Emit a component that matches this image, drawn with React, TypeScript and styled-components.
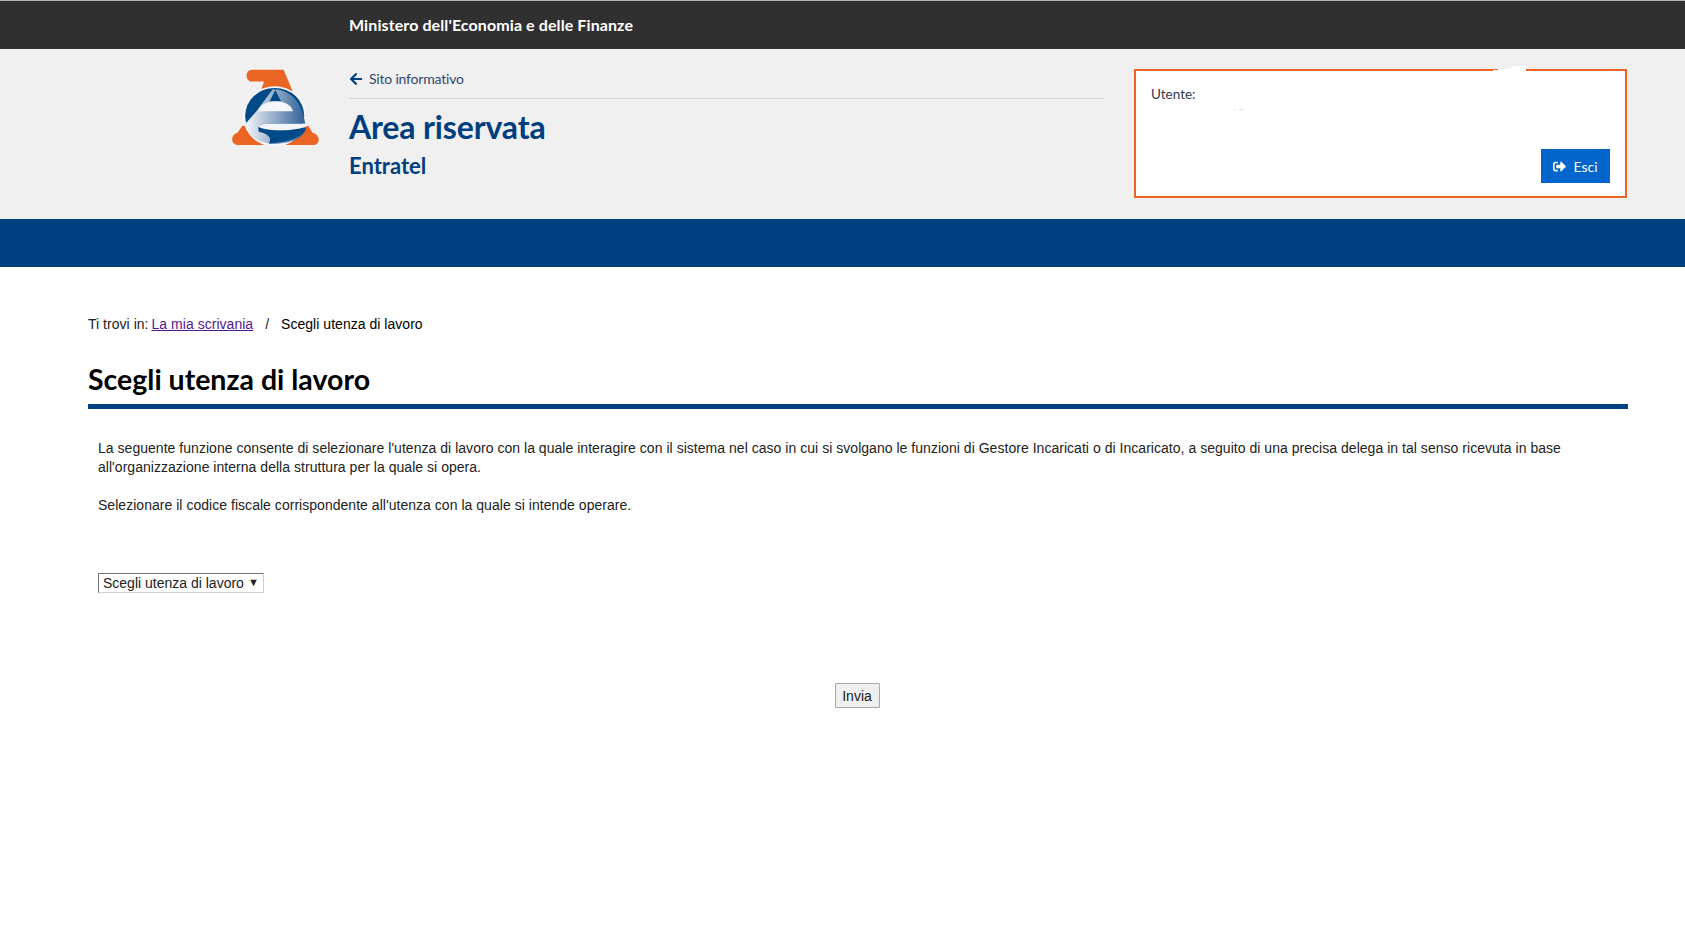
import React from "react";
import styled, { createGlobalStyle } from "styled-components";
import { FaArrowLeft, FaSignOutAlt } from "react-icons/fa";

const Global = createGlobalStyle`
  html, body { margin: 0; padding: 0; background: #fff; }
  body { font-family: "Liberation Sans", Arial, sans-serif; font-size: 14px; color: #222; }
`;

const brandFont = `Lato, "Noto Sans", sans-serif`;

const TopBar = styled.div`
  height: 46px;
  border-top: 1px solid #b5b5b5;
  background: #303030;
  padding: 0 0 2px 349px;
  display: flex;
  align-items: center;
`;

const Ministry = styled.span`
  font-family: ${brandFont};
  font-weight: 700;
  font-size: 16px;
  letter-spacing: 0.1px;
  color: #fff;
`;

const Header = styled.header`
  height: 170px;
  box-sizing: border-box;
  background: #f0f0f0;
  padding: 20px 0 0 232px;
  display: flex;
  align-items: flex-start;
`;

const LogoWrap = styled.div`
  width: 88px;
  margin-right: 29px;
`;

const TitleColumn = styled.div`
  width: 755px;
  margin-right: 30px;
  font-family: ${brandFont};
  color: #003f7f;
`;

const BackLink = styled.div`
  height: 29px;
  border-bottom: 1px solid #d4d4d8;
  display: flex;
  align-items: flex-start;
  gap: 6px;
  font-size: 14px;
  line-height: 20px;
  letter-spacing: -0.2px;
  color: #33476f;
  svg { color: #003f7f; margin-top: 3px; }
`;

const AreaTitle = styled.h1`
  margin: 8px 0 0;
  font-size: 32px;
  line-height: 40px;
  font-weight: 700;
  letter-spacing: -0.15px;
`;

const SubTitle = styled.h2`
  margin: 5px 0 0;
  font-size: 22px;
  line-height: 28px;
  font-weight: 700;
`;

const UserBox = styled.div`
  position: relative;
  width: 493px;
  height: 129px;
  box-sizing: border-box;
  border: 2px solid #ea6423;
  background: #fff;
  padding: 13px 15px;
  display: flex;
  flex-direction: column;
  justify-content: space-between;
  font-family: ${brandFont};
`;

const UserLabel = styled.div`
  font-size: 13.5px;
  line-height: 20px;
  color: #2f3a4f;
`;

const ExitButton = styled.button`
  align-self: flex-end;
  width: 69px;
  height: 34px;
  border: 0;
  background: #0066cc;
  color: #fff;
  font-family: ${brandFont};
  font-size: 14px;
  display: flex;
  align-items: center;
  justify-content: center;
  gap: 7px;
  padding: 0;
`;

const Smudge = styled.svg`
  position: absolute;
  left: 357px;
  top: -6px;
`;

const Speck = styled.svg`
  position: absolute;
  left: 97px;
  top: 38px;
`;

const NavBar = styled.div`
  height: 48px;
  background: #004080;
`;

const Main = styled.main`
  margin: 0 57px 0 88px;
  padding-top: 47px;
`;

const Crumbs = styled.nav`
  line-height: 20px;
  font-size: 14px;
  letter-spacing: 0.03px;
  color: #222;
  display: flex;
`;

const CrumbLink = styled.a`
  color: #551a8b;
  text-decoration: underline;
  margin-left: 3px;
`;

const CrumbSep = styled.span`
  margin: 0 12px;
`;

const CrumbCurrent = styled.span`
  color: #000;
`;

const PageTitle = styled.h2`
  margin: 24px 0 0;
  height: 51px;
  box-sizing: border-box;
  border-bottom: 5px solid #004080;
  font-family: ${brandFont};
  font-size: 28.5px;
  line-height: 42px;
  font-weight: 700;
  color: #000;
`;

const Body = styled.section`
  padding: 30px 10px 0;
`;

const Paragraph = styled.p`
  margin: 0 0 19px;
  font-size: 14px;
  line-height: 19px;
  letter-spacing: 0.033px;
  color: #222;
`;

const SelectWrap = styled.div`
  position: relative;
  display: inline-block;
  margin-top: 39px;
`;

const UtenzaSelect = styled.select`
  appearance: none;
  display: block;
  width: 166px;
  height: 20px;
  box-sizing: border-box;
  border-width: 1px;
  border-style: solid;
  border-color: #767676 #d0d0d0 #d0d0d0 #767676;
  background: #fff;
  padding: 0 0 0 4px;
  border-radius: 0;
  font-family: "Liberation Sans", Arial, sans-serif;
  font-size: 14px;
  color: #222;
`;

const SelectArrow = styled.span`
  position: absolute;
  right: 5px;
  top: 2px;
  font-size: 11px;
  line-height: 14px;
  pointer-events: none;
  color: #222;
`;

const Actions = styled.div`
  display: flex;
  justify-content: center;
  padding: 90px 2px 0 0;
`;

const SendButton = styled.button`
  width: 45px;
  height: 25px;
  padding: 0;
  border: 1px solid #a8a8a8;
  border-radius: 1px;
  background: #efefef;
  font-family: "Liberation Sans", Arial, sans-serif;
  font-size: 14px;
  color: #222;
`;

const Logo = () => (
  <svg width="88" height="77" viewBox="50 25 264 232" style={{ display: "block" }}>
    <defs>
      <linearGradient id="eBand" x1="0" x2="1" y1="0" y2="0">
        <stop offset="0" stopColor="#f4f6fa" />
        <stop offset="1" stopColor="#2f5f96" />
      </linearGradient>
    </defs>
    <path d="M110 27H205L232 92H136L146 63H110C88 63 88 27 110 27Z" fill="#ea6423" />
    <path
      d="M80 197H280L292 217C316 222 318 254 292 254H70C44 254 44 222 66 217Z"
      fill="#ea6423"
    />
    <ellipse cx="178" cy="168" rx="95" ry="91" fill="#f4f6fa" />
    <ellipse cx="178" cy="166" rx="89" ry="84" fill="#004a87" />
    <path
      d="M172 86C225 86 262 125 270 190H150L160 204C190 214 240 212 268 202C272 230 230 250 178 250C130 250 96 225 90 190L125 150Z"
      fill="url(#eBand)"
    />
    <path d="M150 190H272L273 202C230 214 170 214 128 200Z" fill="#f4f6fa" />
    <path d="M180 88L197 122H163Z" fill="#004a87" />
    <path d="M128 152C133 130 160 122 182 122C205 122 228 132 233 152Z" fill="#f4f6fa" />
    <path
      d="M128 200C160 214 225 214 272 200C276 222 230 246 160 250C170 236 165 222 130 214Z"
      fill="#004a87"
    />
  </svg>
);

const App = () => {
  return (
    <>
      <Global />
      <TopBar>
        <Ministry>Ministero dell'Economia e delle Finanze</Ministry>
      </TopBar>
      <Header>
        <LogoWrap>
          <Logo />
        </LogoWrap>
        <TitleColumn>
          <BackLink>
            <FaArrowLeft size={14} />
            Sito informativo
          </BackLink>
          <AreaTitle>Area riservata</AreaTitle>
          <SubTitle>Entratel</SubTitle>
        </TitleColumn>
        <UserBox>
          <Smudge width="34" height="10" viewBox="0 0 34 10">
            <path d="M0 5H5V4H15L22 1H33V9H0Z" fill="#fff" />
          </Smudge>
          <Speck width="12" height="1" viewBox="0 0 12 1">
            <path d="M0 0H2V1H0ZM6 0H11V1H6Z" fill="#e2e4ee" />
          </Speck>
          <UserLabel>Utente:</UserLabel>
          <ExitButton>
            <FaSignOutAlt size={13} />
            Esci
          </ExitButton>
        </UserBox>
      </Header>
      <NavBar />
      <Main>
        <Crumbs>
          Ti trovi in:
          <CrumbLink href="#">La mia scrivania</CrumbLink>
          <CrumbSep>/</CrumbSep>
          <CrumbCurrent>Scegli utenza di lavoro</CrumbCurrent>
        </Crumbs>
        <PageTitle>Scegli utenza di lavoro</PageTitle>
        <Body>
          <Paragraph>
            La seguente funzione consente di selezionare l'utenza di lavoro con la quale interagire con il sistema nel caso in cui si svolgano le funzioni di Gestore Incaricati o di Incaricato, a seguito di una precisa delega in tal senso ricevuta in base all'organizzazione interna della struttura per la quale si opera.
          </Paragraph>
          <Paragraph>
            Selezionare il codice fiscale corrispondente all'utenza con la quale si intende operare.
          </Paragraph>
          <SelectWrap>
            <UtenzaSelect>
              <option>Scegli utenza di lavoro</option>
            </UtenzaSelect>
            <SelectArrow>▼</SelectArrow>
          </SelectWrap>
          <Actions>
            <SendButton>Invia</SendButton>
          </Actions>
        </Body>
      </Main>
    </>
  );
};

export default App;
